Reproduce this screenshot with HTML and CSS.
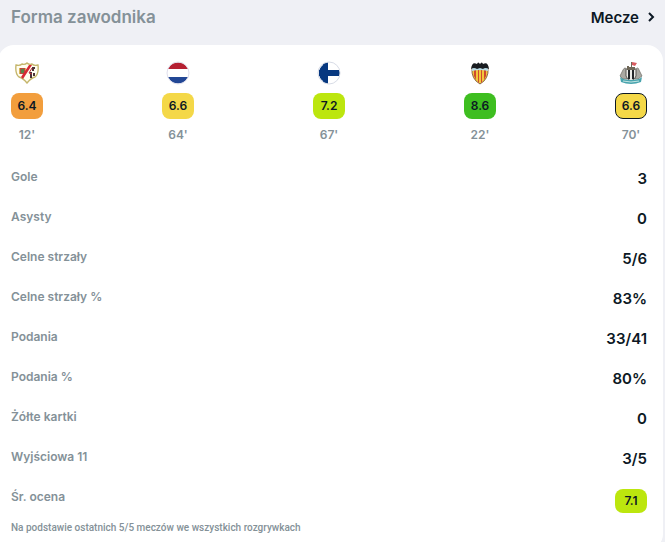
FILE: index.html
```html
<!DOCTYPE html>
<html lang="pl">

<head>
    <meta charset="UTF-8">
    <title>Forma zawodnika</title>
    <link rel="stylesheet" href="styles.css">
</head>

<body>
    <section class="form">
        <div class="header">
            <h2 class="title">Forma zawodnika</h2>
            <a class="more" href="#">Mecze
                <svg class="arrow" viewBox="0 0 8 10" aria-hidden="true">
                    <path d="M2 1l4 4-4 4" />
                </svg>
            </a>
        </div>

        <div class="card">
            <ul class="matches">
                <li class="match">
                    <!-- Rayo -->
                    <svg class="crest" viewBox="0 0 24 24" aria-hidden="true">
                        <path d="M1 4q4 1 6-1 3 1 5-1 2 2 5 1 2 2 6 1 1 9-3 12-4 1-8 6-4-5-8-6Q0 13 1 4z" fill="#fffdf0" stroke="#c5b66c" stroke-width="1.4" />
                        <path d="M4 7h7v6H4z" fill="#bd4b3b" />
                        <path d="M4 7h1v6H4zM10 7h1v6h-1z" fill="#d9b45a" />
                        <path d="M6 8h3v4H6z" fill="#59824a" />
                        <path d="M14 4h3L8 18l-2-2z" fill="#d72835" />
                        <path d="M17 6h3v2h-1v2h-2zM15 11h2v6h-2zM18 12h2v3h-2z" fill="#4a3238" />
                        <path d="M17 7l-3 5 3 1" stroke="#b42b38" fill="none" />
                    </svg>
                    <span class="rating orange">6.4</span>
                    <span class="minutes">12'</span>
                </li>
                <li class="match">
                    <svg class="crest" viewBox="0 0 24 24" aria-hidden="true">
                        <circle cx="12" cy="12" r="11" fill="#fff" />
                        <path d="M2 8a11 11 0 0 1 20 0z" fill="#b52032" />
                        <path d="M2 16a11 11 0 0 0 20 0z" fill="#224795" />
                        <circle cx="12" cy="12" r="11" fill="none" stroke="#e0dfec" />
                    </svg>
                    <span class="rating yellow">6.6</span>
                    <span class="minutes">64'</span>
                </li>
                <li class="match">
                    <svg class="crest" viewBox="0 0 24 24" aria-hidden="true">
                        <circle cx="12" cy="12" r="11" fill="#fff" />
                        <path d="M6 3v6H2v6h4v6l5 2v-8h12V9H11V1z" fill="#073880" />
                        <path d="M6 4Q2 7 2 12t4 8z" fill="#073880" />
                        <circle cx="12" cy="12" r="11" fill="none" stroke="#d8dce6" />
                    </svg>
                    <span class="rating lime">7.2</span>
                    <span class="minutes">67'</span>
                </li>
                <li class="match">
                    <!-- Valencia -->
                    <svg class="crest" viewBox="0 0 24 24" aria-hidden="true">
                        <path d="M4 7q8-3 16 0 1 11-8 16Q3 18 4 7z" fill="#f1c83c" stroke="#8b6547" />
                        <path d="M6 9h2v10l-2-4zM10 9h1v13l-1-1zM13 9h1v12l-1 1zM16 9h2v6l-2 4z" fill="#d0492e" />
                        <path d="M4 6h16v4q-8-2-16 0z" fill="#b9dae4" />
                        <path d="M12 3q2-3 3 0 5-3 6 5-4-2-6 0l-3-1-3 1Q6 6 3 8 4 0 9 3q1-3 3 0z" fill="#191c20" />
                    </svg>
                    <span class="rating green">8.6</span>
                    <span class="minutes">22'</span>
                </li>
                <li class="match">
                    <!-- Newcastle -->
                    <svg class="crest" viewBox="0 0 24 24" aria-hidden="true">
                        <path d="M4 9q2-4 4 0v9H4l-3-3zM16 9q3-4 4 0l3 6-4 3h-3z" fill="#aaa9a3" stroke="#77756f" stroke-width=".8" />
                        <path d="M7 8h10v7q-1 4-5 5-4-1-5-5z" fill="#eeeeea" stroke="#5a5854" />
                        <path d="M9 8h2v10H9zM13 8h2v10h-2z" fill="#24272a" />
                        <path d="M8 9V5h2v1h2V1h1v5h3v3z" fill="#6f6758" />
                        <path d="M13 1l5 1-2 3-3-1z" fill="#d85b60" />
                        <path d="M1 16q3 3 11 3t11-3l-1 5q-10 4-20 0z" fill="#49a4ae" />
                        <path d="M4 20q8 2 16 0" stroke="#c4e5e3" fill="none" />
                    </svg>
                    <span class="rating yellow current">6.6</span>
                    <span class="minutes">70'</span>
                </li>
            </ul>

            <dl class="stats">
                <div class="row">
                    <dt>Gole</dt>
                    <dd>3</dd>
                </div>
                <div class="row">
                    <dt>Asysty</dt>
                    <dd>0</dd>
                </div>
                <div class="row">
                    <dt>Celne strzały</dt>
                    <dd>5/6</dd>
                </div>
                <div class="row">
                    <dt>Celne strzały %</dt>
                    <dd>83%</dd>
                </div>
                <div class="row">
                    <dt>Podania</dt>
                    <dd>33/41</dd>
                </div>
                <div class="row">
                    <dt>Podania %</dt>
                    <dd>80%</dd>
                </div>
                <div class="row">
                    <dt>Żółte kartki</dt>
                    <dd>0</dd>
                </div>
                <div class="row">
                    <dt>Wyjściowa 11</dt>
                    <dd>3/5</dd>
                </div>
                <div class="row">
                    <dt>Śr. ocena</dt>
                    <dd class="rating lime average">7.1</dd>
                </div>
            </dl>
            <p class="note">Na podstawie ostatnich 5/5 meczów we wszystkich rozgrywkach</p>
        </div>
    </section>
</body>

</html>
```

FILE: styles.css
```css
body,
h2,
ul,
dl,
dd,
p {
    margin: 0;
    padding: 0;
}

body {
    background: #eff0f5;
    color: #0c1824;
    font-family: Inter, "Noto Sans", sans-serif;
}

.form {
    padding-right: 2px;
}

.header {
    display: flex;
    justify-content: space-between;
    align-items: center;
    height: 34px;
    padding: 0 8px 11px 11px;
}

.title {
    color: #849198;
    font-size: 17px;
    font-weight: 600;
}

.more {
    display: flex;
    align-items: center;
    gap: 8px;
    color: inherit;
    font-size: 15px;
    font-weight: 600;
    text-decoration: none;
}

.arrow {
    width: 8px;
    height: 10px;
    fill: none;
    stroke: #0c1824;
    stroke-width: 2;
}

.card {
    margin-left: -2px;
    padding: 16px 16px 14px 13px;
    background: #fff;
    border-radius: 16px;
}

.matches {
    display: flex;
    justify-content: space-between;
    list-style: none;
}

.match {
    display: flex;
    flex-direction: column;
    align-items: center;
    width: 32px;
}

.crest {
    width: 24px;
    height: 24px;
    margin-bottom: 8px;
}

.rating {
    box-sizing: border-box;
    width: 32px;
    height: 26px;
    border-radius: 8px;
    font-size: 12px;
    font-weight: 600;
    line-height: 26px;
    text-align: center;
}

.orange {
    background: #f29e3d;
}

.yellow {
    background: #f4d848;
}

.lime {
    background: #bce60e;
}

.green {
    background: #3ebe20;
}

.current {
    border: 1px solid #0c1824;
    line-height: 24px;
}

.minutes {
    margin-top: 6px;
    color: #849198;
    font-size: 12px;
    font-weight: 600;
    line-height: 20px;
}

.stats {
    display: flex;
    flex-direction: column;
    gap: 18px;
    padding-top: 22px;
}

.row {
    display: flex;
    justify-content: space-between;
    align-items: flex-start;
}

.row dt {
    color: #849198;
    font-size: 12px;
    font-weight: 600;
    line-height: 20px;
}

.row dd {
    margin-top: 2px;
    font-size: 15px;
    font-weight: 600;
    line-height: 20px;
}

.row .average {
    height: 24px;
    font-size: 12px;
    line-height: 24px;
}

.note {
    margin-top: 7px;
    color: #849198;
    font-family: Roboto, "Noto Sans", sans-serif;
    font-size: 10px;
    font-weight: 500;
    line-height: 16px;
}
```
